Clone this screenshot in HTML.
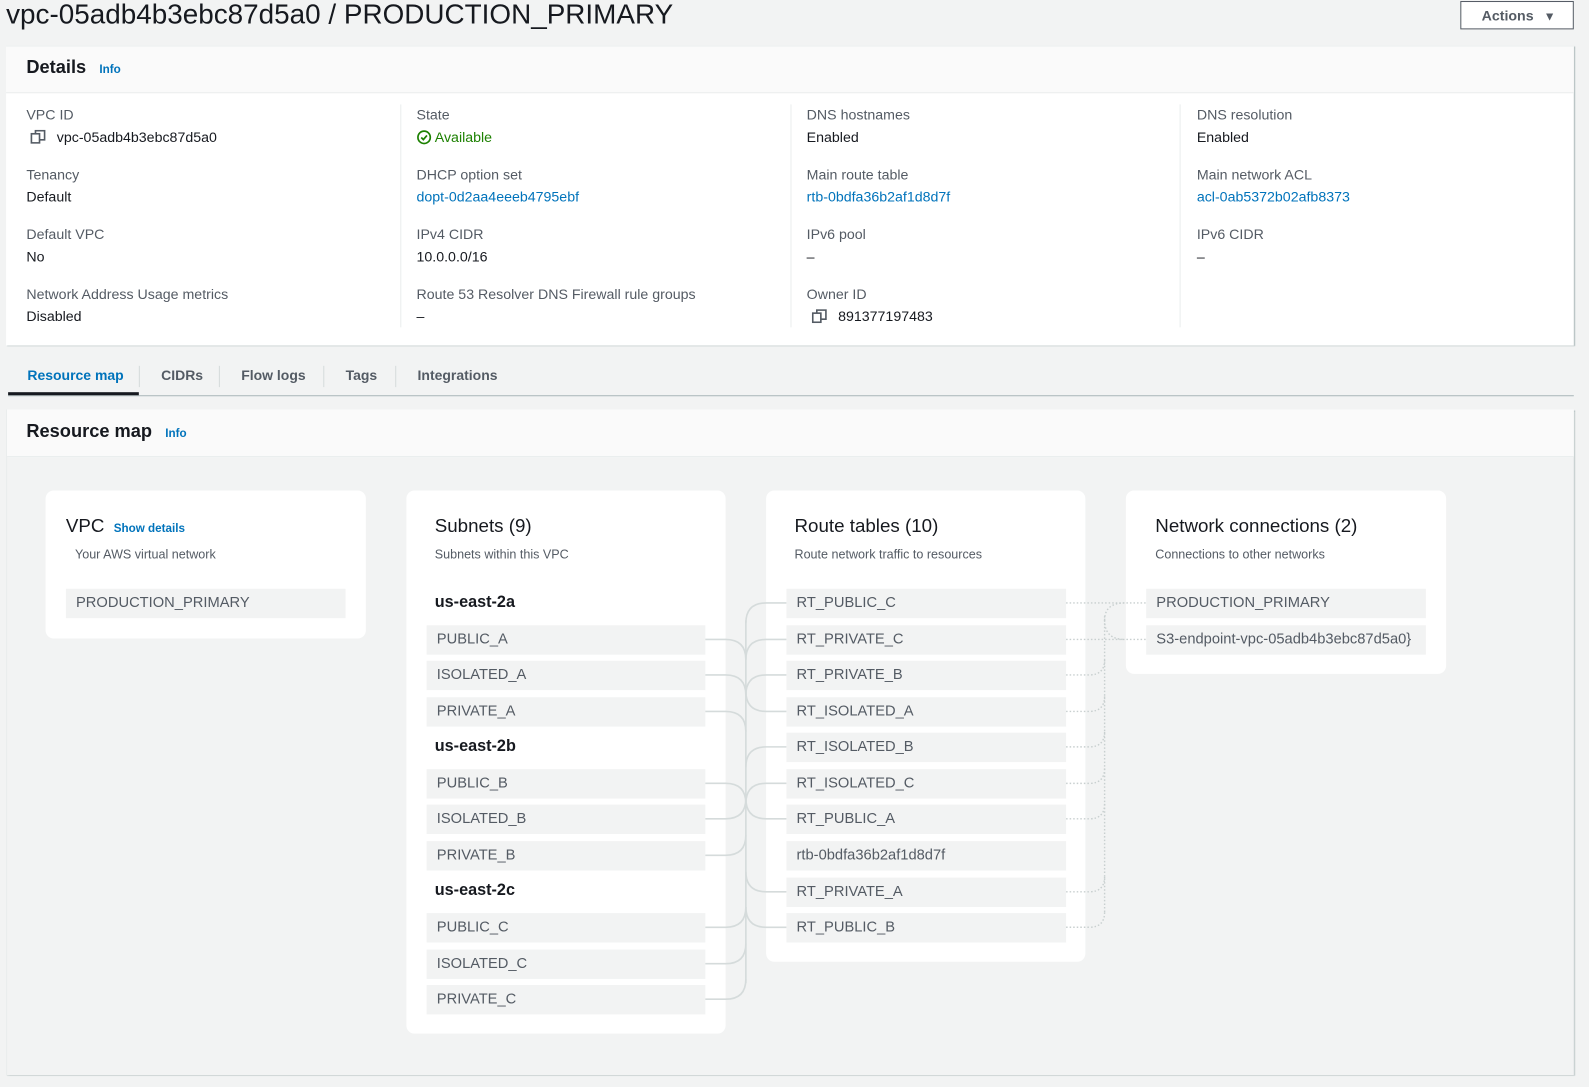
<!DOCTYPE html>
<html><head><meta charset="utf-8"><style>
*{box-sizing:border-box;margin:0;padding:0}
body{width:1589px;height:1087px;background:#f2f3f3;font-family:"Liberation Sans",sans-serif;color:#16191f;position:relative;overflow:hidden}
#w{position:absolute;left:0;top:0;width:1568px;height:1073px;transform:scale(1.0134);transform-origin:0 0}
.a{position:absolute;white-space:nowrap}
.lbl{font-size:14px;color:#545b64}
.val{font-size:14px;color:#16191f}
.lnk{font-size:14px;color:#0073bb}
.card{position:absolute;background:#fff;border-radius:8px}
.row{position:absolute;height:29px;background:#f2f3f3;font-size:14.5px;color:#545b64;line-height:29px;padding-left:10px}
.info{color:#0073bb;font-weight:bold;font-size:11.5px}
.sub{font-size:12.4px;color:#545b64}
.ttl{font-size:18.5px}
</style></head><body><div id="w">
<div class="a" style="left:6px;top:-2px;font-size:27.5px;color:#16191f">vpc-05adb4b3ebc87d5a0 / PRODUCTION_PRIMARY</div>
<div class="a" style="left:1441px;top:1px;width:112px;height:28px;border:1px solid #545b64;background:#fff;font-size:14px;font-weight:bold;color:#545b64;line-height:26px;padding-left:20px">Actions <span style="font-size:12px;margin-left:6px">▼</span></div>

<div class="a" style="left:6px;top:45px;width:1547px;height:296px;background:#fff;box-shadow:1px 1px 1px #aab7b8;border-top:1px solid #eaeded">
<div style="height:46px;background:#fafafa;border-bottom:1px solid #eaeded"></div>
</div>
<div class="a" style="left:26px;top:56px;font-size:18px;font-weight:bold">Details <span class="info" style="margin-left:8px">Info</span></div>
<div class="a" style="left:395px;top:103px;width:1px;height:220px;background:#eaeded"></div>
<div class="a" style="left:780px;top:103px;width:1px;height:220px;background:#eaeded"></div>
<div class="a" style="left:1164px;top:103px;width:1px;height:220px;background:#eaeded"></div>

<div class="a lbl" style="left:26px;top:105px">VPC ID</div>
<div class="a val" style="left:30px;top:127px"><svg width="16" height="14" style="vertical-align:-2px;margin-right:10px" viewBox="0 0 16 14"><rect x="1" y="4" width="8" height="9" fill="none" stroke="#545b64" stroke-width="1.6"/><path d="M5 4V1h9v9h-5" fill="none" stroke="#545b64" stroke-width="1.6"/></svg>vpc-05adb4b3ebc87d5a0</div>
<div class="a lbl" style="left:26px;top:164px">Tenancy</div><div class="a val" style="left:26px;top:186px">Default</div>
<div class="a lbl" style="left:26px;top:223px">Default VPC</div><div class="a val" style="left:26px;top:245px">No</div>
<div class="a lbl" style="left:26px;top:282px">Network Address Usage metrics</div><div class="a val" style="left:26px;top:304px">Disabled</div>

<div class="a lbl" style="left:411px;top:105px">State</div>
<div class="a" style="left:411px;top:127px;font-size:14px;color:#1d8102"><svg width="15" height="15" style="vertical-align:-3px;margin-right:3px" viewBox="0 0 16 16"><circle cx="8" cy="8" r="6.5" fill="none" stroke="#1d8102" stroke-width="1.8"/><path d="M5 8.2l2.2 2.2L11 6" fill="none" stroke="#1d8102" stroke-width="1.8"/></svg>Available</div>
<div class="a lbl" style="left:411px;top:164px">DHCP option set</div><div class="a lnk" style="left:411px;top:186px">dopt-0d2aa4eeeb4795ebf</div>
<div class="a lbl" style="left:411px;top:223px">IPv4 CIDR</div><div class="a val" style="left:411px;top:245px">10.0.0.0/16</div>
<div class="a lbl" style="left:411px;top:282px">Route 53 Resolver DNS Firewall rule groups</div><div class="a val" style="left:411px;top:304px">–</div>

<div class="a lbl" style="left:796px;top:105px">DNS hostnames</div><div class="a val" style="left:796px;top:127px">Enabled</div>
<div class="a lbl" style="left:796px;top:164px">Main route table</div><div class="a lnk" style="left:796px;top:186px">rtb-0bdfa36b2af1d8d7f</div>
<div class="a lbl" style="left:796px;top:223px">IPv6 pool</div><div class="a val" style="left:796px;top:245px">–</div>
<div class="a lbl" style="left:796px;top:282px">Owner ID</div>
<div class="a val" style="left:801px;top:304px"><svg width="16" height="14" style="vertical-align:-2px;margin-right:10px" viewBox="0 0 16 14"><rect x="1" y="4" width="8" height="9" fill="none" stroke="#545b64" stroke-width="1.6"/><path d="M5 4V1h9v9h-5" fill="none" stroke="#545b64" stroke-width="1.6"/></svg>891377197483</div>

<div class="a lbl" style="left:1181px;top:105px">DNS resolution</div><div class="a val" style="left:1181px;top:127px">Enabled</div>
<div class="a lbl" style="left:1181px;top:164px">Main network ACL</div><div class="a lnk" style="left:1181px;top:186px">acl-0ab5372b02afb8373</div>
<div class="a lbl" style="left:1181px;top:223px">IPv6 CIDR</div><div class="a val" style="left:1181px;top:245px">–</div>

<div class="a" style="left:8px;top:390px;width:1545px;height:1px;background:#aab7b8"></div>
<div class="a" style="left:8px;top:387px;width:129px;height:3px;background:#16191f"></div>
<div class="a" style="left:27px;top:363px;font-size:13.8px;font-weight:bold;color:#0073bb">Resource map</div>
<div class="a" style="left:159px;top:363px;font-size:13.8px;font-weight:bold;color:#545b64">CIDRs</div>
<div class="a" style="left:238px;top:363px;font-size:13.8px;font-weight:bold;color:#545b64">Flow logs</div>
<div class="a" style="left:341px;top:363px;font-size:13.8px;font-weight:bold;color:#545b64">Tags</div>
<div class="a" style="left:412px;top:363px;font-size:13.8px;font-weight:bold;color:#545b64">Integrations</div>
<div class="a" style="left:137px;top:361px;width:1px;height:21px;background:#d5dbdb"></div>
<div class="a" style="left:216px;top:361px;width:1px;height:21px;background:#d5dbdb"></div>
<div class="a" style="left:319px;top:361px;width:1px;height:21px;background:#d5dbdb"></div>
<div class="a" style="left:390px;top:361px;width:1px;height:21px;background:#d5dbdb"></div>

<div class="a" style="left:6px;top:404px;width:1547px;height:657px;background:#f2f3f3;box-shadow:1px 1px 1px #aab7b8;border-left:1px solid #eaeded">
<div style="height:47px;background:#fafafa;border-bottom:1px solid #eaeded"></div>
</div>
<div class="a" style="left:26px;top:415px;font-size:18px;font-weight:bold">Resource map <span class="info" style="margin-left:8px">Info</span></div>

<div class="card" style="left:45px;top:484px;width:316px;height:146px"></div>
<div class="card" style="left:401px;top:484px;width:315px;height:536px"></div>
<div class="card" style="left:756px;top:484px;width:315px;height:465px"></div>
<div class="card" style="left:1111px;top:484px;width:316px;height:181px"></div>

<div class="a ttl" style="left:65px;top:508px">VPC <span style="font-size:11.5px;font-weight:bold;color:#0073bb;margin-left:4px">Show details</span></div>
<div class="a sub" style="left:74px;top:540px">Your AWS virtual network</div>
<div class="row" style="left:65px;top:581px;width:276px">PRODUCTION_PRIMARY</div>

<div class="a ttl" style="left:429px;top:508px">Subnets (9)</div>
<div class="a sub" style="left:429px;top:540px">Subnets within this VPC</div>
<div class="a" style="left:429px;top:586px;font-size:16px;font-weight:bold">us-east-2a</div>
<div class="a" style="left:429px;top:728px;font-size:16px;font-weight:bold">us-east-2b</div>
<div class="a" style="left:429px;top:870px;font-size:16px;font-weight:bold">us-east-2c</div>
<div class="row" style="left:421px;top:617px;width:275px">PUBLIC_A</div>
<div class="row" style="left:421px;top:652px;width:275px">ISOLATED_A</div>
<div class="row" style="left:421px;top:688px;width:275px">PRIVATE_A</div>
<div class="row" style="left:421px;top:759px;width:275px">PUBLIC_B</div>
<div class="row" style="left:421px;top:794px;width:275px">ISOLATED_B</div>
<div class="row" style="left:421px;top:830px;width:275px">PRIVATE_B</div>
<div class="row" style="left:421px;top:901px;width:275px">PUBLIC_C</div>
<div class="row" style="left:421px;top:937px;width:275px">ISOLATED_C</div>
<div class="row" style="left:421px;top:972px;width:275px">PRIVATE_C</div>

<div class="a ttl" style="left:784px;top:508px">Route tables (10)</div>
<div class="a sub" style="left:784px;top:540px">Route network traffic to resources</div>
<div class="row" style="left:776px;top:581px;width:276px">RT_PUBLIC_C</div>
<div class="row" style="left:776px;top:617px;width:276px">RT_PRIVATE_C</div>
<div class="row" style="left:776px;top:652px;width:276px">RT_PRIVATE_B</div>
<div class="row" style="left:776px;top:688px;width:276px">RT_ISOLATED_A</div>
<div class="row" style="left:776px;top:723px;width:276px">RT_ISOLATED_B</div>
<div class="row" style="left:776px;top:759px;width:276px">RT_ISOLATED_C</div>
<div class="row" style="left:776px;top:794px;width:276px">RT_PUBLIC_A</div>
<div class="row" style="left:776px;top:830px;width:276px">rtb-0bdfa36b2af1d8d7f</div>
<div class="row" style="left:776px;top:866px;width:276px">RT_PRIVATE_A</div>
<div class="row" style="left:776px;top:901px;width:276px">RT_PUBLIC_B</div>

<div class="a ttl" style="left:1140px;top:508px">Network connections (2)</div>
<div class="a sub" style="left:1140px;top:540px">Connections to other networks</div>
<div class="row" style="left:1131px;top:581px;width:276px">PRODUCTION_PRIMARY</div>
<div class="row" style="left:1131px;top:617px;width:276px">S3-endpoint-vpc-05adb4b3ebc87d5a0}</div>

<svg class="a" style="left:0;top:0" width="1568" height="1073">
<g fill="none" stroke="#d5dbdb" stroke-width="1.6">
<path d="M736 612V970"/>
<path d="M696 631H716Q736 631 736 651"/><path d="M696 666H716Q736 666 736 686"/><path d="M696 702H716Q736 702 736 722"/>
<path d="M696 773H716Q736 773 736 793"/><path d="M696 808H716Q736 808 736 788"/><path d="M696 844H716Q736 844 736 824"/>
<path d="M696 915H716Q736 915 736 895"/><path d="M696 951H716Q736 951 736 931"/><path d="M696 986H716Q736 986 736 966"/>
<path d="M776 595H756Q736 595 736 615"/><path d="M776 631H756Q736 631 736 651"/><path d="M776 666H756Q736 666 736 686"/>
<path d="M776 702H756Q736 702 736 682"/><path d="M776 737H756Q736 737 736 757"/><path d="M776 773H756Q736 773 736 793"/>
<path d="M776 808H756Q736 808 736 788"/><path d="M776 880H756Q736 880 736 860"/><path d="M776 915H756Q736 915 736 895"/>
</g>
<g fill="none" stroke="#c8cfcf" stroke-width="1.4" stroke-dasharray="1.5 2">
<path d="M1090 608V902"/>
<path d="M1052 595H1131"/><path d="M1052 631H1131"/>
<path d="M1090 612Q1090 595 1110 595"/><path d="M1090 612Q1090 631 1110 631"/>
<path d="M1052 666H1075Q1090 666 1090 651"/><path d="M1052 702H1075Q1090 702 1090 687"/>
<path d="M1052 737H1075Q1090 737 1090 722"/><path d="M1052 773H1075Q1090 773 1090 758"/>
<path d="M1052 808H1075Q1090 808 1090 793"/><path d="M1052 880H1075Q1090 880 1090 865"/>
<path d="M1052 915H1075Q1090 915 1090 900"/>
</g>
</svg>
</div></body></html>
